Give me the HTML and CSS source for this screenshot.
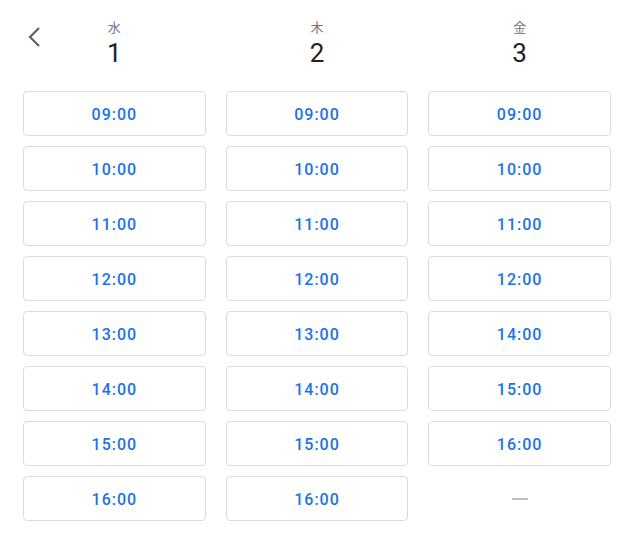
FILE: index.html
```html
<!DOCTYPE html>
<html lang="ja">

<head>
    <meta charset="UTF-8">
    <meta name="viewport" content="width=device-width, initial-scale=1.0">
    <title>予約</title>
    <link rel="stylesheet" href="styles.css">
</head>

<body>
    <div class="picker">
        <!-- Back button -->
        <button class="back" aria-label="前へ">
            <svg width="24" height="24" viewBox="0 0 24 24">
                <path d="M16 3 L7 12 L16 21" fill="none" stroke="#5f6368" stroke-width="2.2" />
            </svg>
        </button>

        <!-- Day headers -->
        <div class="days">
            <div class="day">
                <div class="day-name">水</div>
                <div class="day-num">1</div>
            </div>
            <div class="day">
                <div class="day-name">木</div>
                <div class="day-num">2</div>
            </div>
            <div class="day">
                <div class="day-name">金</div>
                <div class="day-num">3</div>
            </div>
        </div>

        <!-- Slots -->
        <div class="slots">
            <div class="col">
                <button class="slot">09:00</button>
                <button class="slot">10:00</button>
                <button class="slot">11:00</button>
                <button class="slot">12:00</button>
                <button class="slot">13:00</button>
                <button class="slot">14:00</button>
                <button class="slot">15:00</button>
                <button class="slot">16:00</button>
            </div>
            <div class="col">
                <button class="slot">09:00</button>
                <button class="slot">10:00</button>
                <button class="slot">11:00</button>
                <button class="slot">12:00</button>
                <button class="slot">13:00</button>
                <button class="slot">14:00</button>
                <button class="slot">15:00</button>
                <button class="slot">16:00</button>
            </div>
            <div class="col">
                <button class="slot">09:00</button>
                <button class="slot">10:00</button>
                <button class="slot">11:00</button>
                <button class="slot">12:00</button>
                <button class="slot">14:00</button>
                <button class="slot">15:00</button>
                <button class="slot">16:00</button>
                <div class="empty"><span class="dash"></span></div>
            </div>
        </div>
    </div>
</body>

</html>
```

FILE: styles.css
```css
body {
    margin: 0;
    background-color: #ffffff;
    font-family: Roboto, "Noto Sans CJK JP", sans-serif;
}

.picker {
    position: relative;
    padding: 19px 23px 0 23px;
}

.back {
    position: absolute;
    left: 23px;
    top: 25px;
    width: 24px;
    height: 24px;
    padding: 0;
    border: none;
    background: none;
    cursor: pointer;
}

.days {
    display: grid;
    grid-template-columns: 1fr 1fr 1fr;
    column-gap: 20px;
}

.day {
    text-align: center;
}

.day-name {
    font-size: 13px;
    line-height: 18px;
    color: #70757a;
}

.day-num {
    font-size: 26px;
    line-height: 32px;
    color: #202124;
}

.slots {
    display: grid;
    grid-template-columns: 1fr 1fr 1fr;
    column-gap: 20px;
    margin-top: 22px;
}

.col {
    display: flex;
    flex-direction: column;
    gap: 10px;
}

.slot {
    height: 45px;
    padding-top: 2px;
    border: 1px solid #dadce0;
    border-radius: 4px;
    background-color: #ffffff;
    color: #1a73e8;
    font-family: Roboto, sans-serif;
    font-size: 16px;
    font-weight: 500;
    letter-spacing: 1px;
    cursor: pointer;
}

.empty {
    height: 45px;
    display: flex;
    align-items: center;
    justify-content: center;
}

.dash {
    width: 16px;
    height: 2px;
    background-color: #bdc1c6;
}
```
